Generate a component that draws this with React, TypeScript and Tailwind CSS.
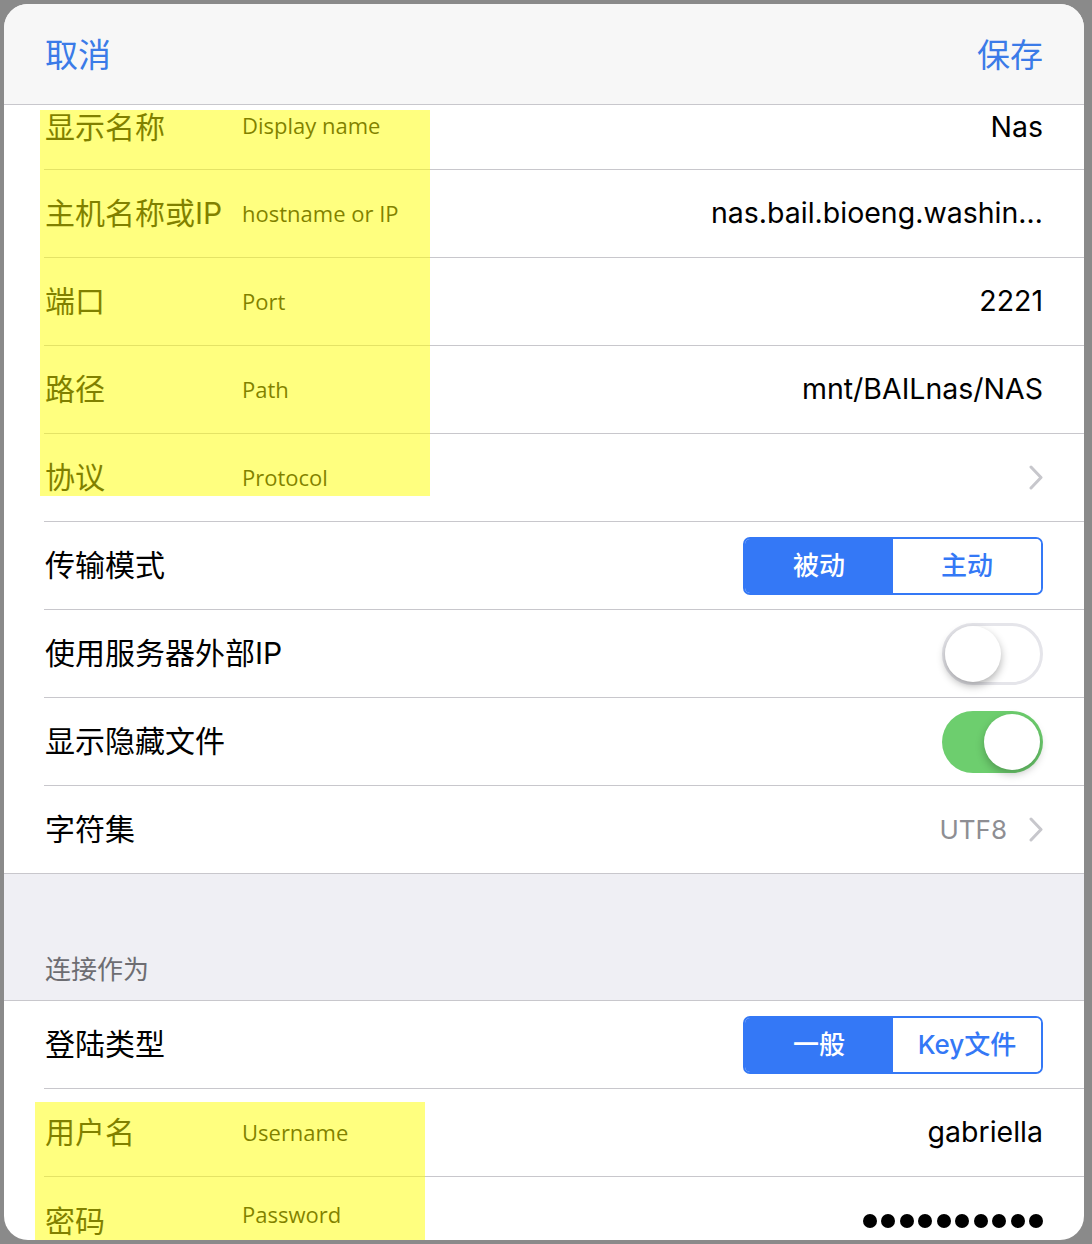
import React from "react";

const sep = "border-b border-[#c8c7cc]";

function Chevron() {
  return (
    <svg width="14" height="25" viewBox="0 0 14 25" fill="none">
      <path d="M2 2 L12 12.5 L2 23" stroke="#c7c7cc" strokeWidth="3" strokeLinecap="round" strokeLinejoin="round" />
    </svg>
  );
}

function Segmented({ left, right }: { left: string; right: string }) {
  return (
    <div className="flex w-[300px] h-[58px] rounded-[7px] border-2 border-[#3478f6] overflow-hidden text-[26px] font-medium">
      <div className="flex-1 flex items-center justify-center bg-[#3478f6] text-white">{left}</div>
      <div className="flex-1 flex items-center justify-center bg-white text-[#3478f6]">{right}</div>
    </div>
  );
}

function Switch({ on }: { on: boolean }) {
  return on ? (
    <div className="w-[101px] h-[62px] rounded-full bg-[#6dce6e] flex items-center justify-end pr-[3px]">
      <div className="w-[56px] h-[56px] rounded-full bg-white shadow-[0_4px_8px_rgba(0,0,0,0.25)]" />
    </div>
  ) : (
    <div className="w-[101px] h-[62px] rounded-full bg-white border-[3px] border-[#e5e5ea] flex items-center">
      <div className="w-[56px] h-[56px] rounded-full bg-white shadow-[0_4px_8px_rgba(0,0,0,0.3)]" />
    </div>
  );
}

function Label({ zh, en, enClass = "" }: { zh: string; en?: string; enClass?: string }) {
  return (
    <div className="flex items-center">
      <span className={en ? "w-[197px] shrink-0 text-[30px]" : "text-[30px]"}>{zh}</span>
      {en && <span className={"font-['Open_Sans',sans-serif] text-[22px] " + enClass}>{en}</span>}
    </div>
  );
}

function Row({ children, last = false, h = "h-[88px]" }: { children: React.ReactNode; last?: boolean; h?: string }) {
  return (
    <div className={`${h} ml-[40px] pl-[1px] pr-[41px] flex items-center justify-between ${last ? "" : sep}`}>
      {children}
    </div>
  );
}

export default function App() {
  return (
    <div className="w-[1092px] h-[1244px] bg-[#8a8a8a] pt-[4px] pl-[4px] overflow-hidden font-['Inter','Noto_Sans_CJK_SC',sans-serif] text-black">
      <div className="relative w-[1080px] h-[1236px] bg-white rounded-[24px] overflow-hidden">
        {/* nav bar */}
        <div className={`h-[101px] bg-[#f7f7f7] flex items-center justify-between px-[41px] ${sep}`}>
          <span className="text-[33px] text-[#3b7be8] font-['Noto_Sans_CJK_SC',sans-serif]">取消</span>
          <span className="text-[33px] text-[#3b7be8] font-['Noto_Sans_CJK_SC',sans-serif]">保存</span>
        </div>

        <div className={`h-[65px] ml-[40px] pl-[1px] pr-[41px] pb-[20px] flex items-center justify-between ${sep}`}>
          <Label zh="显示名称" en="Display name" enClass="mb-[4px]" />
          <span className="text-[28.5px]">Nas</span>
        </div>
        <Row>
          <Label zh="主机名称或IP" en="hostname or IP" />
          <span className="text-[28.5px]">nas.bail.bioeng.washin…</span>
        </Row>
        <Row>
          <Label zh="端口" en="Port" />
          <span className="text-[28.5px]">2221</span>
        </Row>
        <Row>
          <Label zh="路径" en="Path" />
          <span className="text-[28.5px]">mnt/BAILnas/NAS</span>
        </Row>
        <Row>
          <Label zh="协议" en="Protocol" />
          <Chevron />
        </Row>
        <Row>
          <Label zh="传输模式" />
          <Segmented left="被动" right="主动" />
        </Row>
        <Row>
          <Label zh="使用服务器外部IP" />
          <Switch on={false} />
        </Row>
        <Row>
          <Label zh="显示隐藏文件" />
          <Switch on={true} />
        </Row>
        <Row last h="h-[87px]">
          <Label zh="字符集" />
          <div className="flex items-center gap-[22px]">
            <span className="text-[26px] text-[#8e8e93]">UTF8</span>
            <Chevron />
          </div>
        </Row>

        {/* section gap */}
        <div className="h-[128px] bg-[#efeff4] border-y border-[#c8c7cc] flex items-end pl-[41px] pb-[11px]">
          <span className="text-[26px] text-[#6d6d72]">连接作为</span>
        </div>

        <Row>
          <Label zh="登陆类型" />
          <Segmented left="一般" right="Key文件" />
        </Row>
        <Row>
          <Label zh="用户名" en="Username" />
          <span className="text-[28.5px]">gabriella</span>
        </Row>
        <Row last>
          <Label zh="密码" en="Password" enClass="mb-[14px]" />
          <div className="flex gap-[4.5px]">
            {Array.from({ length: 10 }).map((_, i) => (
              <div key={i} className="w-[14px] h-[14px] rounded-full bg-black" />
            ))}
          </div>
        </Row>

        {/* highlighter marks */}
        <div className="absolute left-[36px] top-[106px] w-[390px] h-[386px] bg-[rgba(255,255,0,0.5)] pointer-events-none" />
        <div className="absolute left-[31px] top-[1098px] w-[390px] h-[138px] bg-[rgba(255,255,0,0.5)] pointer-events-none" />
      </div>
    </div>
  );
}
